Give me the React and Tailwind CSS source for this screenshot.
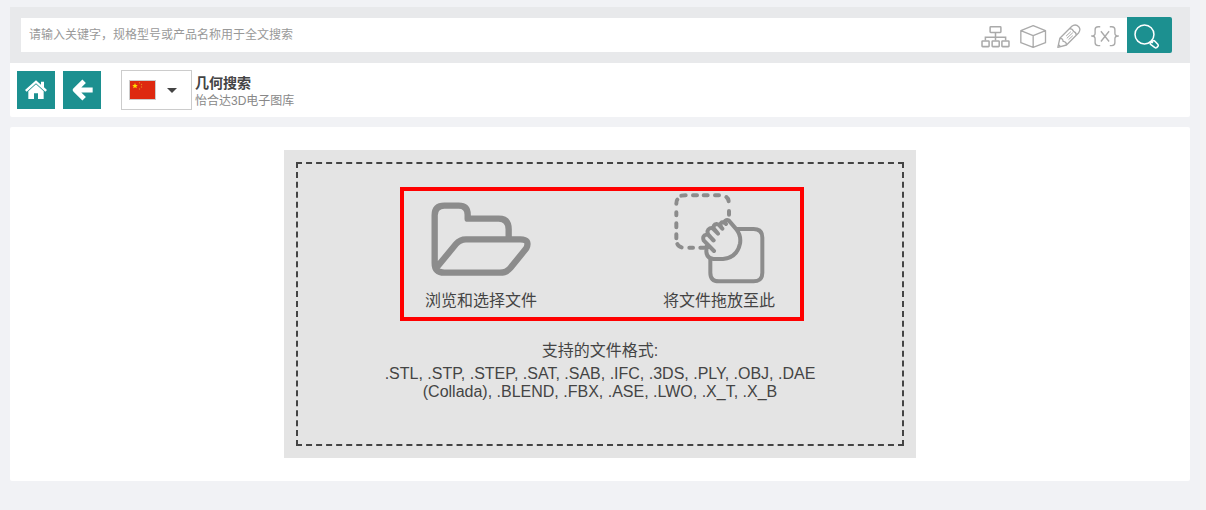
import { useState } from "react";

const FORMATS =
  ".STL, .STP, .STEP, .SAT, .SAB, .IFC, .3DS, .PLY, .OBJ, .DAE (Collada), .BLEND, .FBX, .ASE, .LWO, .X_T, .X_B";

function TreeIcon() {
  return (
    <svg viewBox="46 76 86 68" className="h-[23px] w-[29px]" fill="none" stroke="#aaa" strokeWidth="4.5">
      <rect x="73" y="81" width="32" height="17" rx="2" />
      <path d="M89 98v24M59 122v-10h60v10" />
      <rect x="49" y="123" width="21" height="17" rx="2" />
      <rect x="79" y="123" width="21" height="17" rx="2" />
      <rect x="108" y="123" width="21" height="17" rx="2" />
    </svg>
  );
}

function CubeIcon() {
  return (
    <svg viewBox="159 76 80 69" className="h-[23px] w-[27px]" fill="none" stroke="#aaa" strokeWidth="4" strokeLinejoin="round">
      <path d="M198 78l37 15v36l-37 14-37-14V93zM161 93l37 15 37-15M198 108v35" />
    </svg>
  );
}

function PencilIcon() {
  return (
    <svg viewBox="272 74 71 72" className="h-6 w-6" fill="none" stroke="#aaa" strokeWidth="4" strokeLinejoin="round">
      <path d="M274 144l6-27 36-36q8-7 17-2l5 5q5 8-2 17l-36 36zM280 117q9-1 10 9 10 1 10 11M309 88q9 0 12 8 9 3 8 13M275 135l8 8" />
      <path d="M299 110l14-13M301 117l18-17M306 121l13-12" strokeWidth="3" />
    </svg>
  );
}

function BracesIcon() {
  return (
    <svg viewBox="375 78 82 64" className="h-[22px] w-7" fill="none" stroke="#aaa" strokeWidth="4" strokeLinejoin="round">
      <path d="M402 83h-6q-9 0-9 9v10q0 8-10 8 10 0 10 8v11q0 9 9 9h6M430 83h6q9 0 9 9v10q0 8 10 8-10 0-10 8v11q0 9-9 9h-6M404 96l24 30M428 96l-24 30" />
    </svg>
  );
}

function SearchIcon() {
  return (
    <svg viewBox="506 73 74 74" className="mr-[6px] h-[25px] w-[25px]" fill="none" stroke="#fff" strokeWidth="4.5" strokeLinejoin="round">
      <circle cx="537" cy="104" r="28" />
      <path d="M556 124l6 5M554 131l7-8q4-2 7 1l9 10q2 3-1 6l-3 3q-3 2-6-1l-12-9q-2-1-1-2z" />
    </svg>
  );
}

function HomeIcon() {
  return (
    <svg viewBox="76 238 66 58" className="h-5 w-[22px]" fill="#fff">
      <path d="M109 238l15 13v-9h9v17l9 8-5 5-28-25-28 25-5-5z" />
      <path d="M109 250l23 21v23h-17v-17h-12v17H86v-23z" />
    </svg>
  );
}

function BackIcon() {
  return (
    <svg viewBox="217 236 64 66" className="h-[22px] w-[21px]" fill="none" stroke="#fff" strokeWidth="15" strokeLinejoin="round">
      <path d="M254 242l-27 27 27 27M228 269h52" />
    </svg>
  );
}

function ChinaFlag() {
  return (
    <svg viewBox="0 0 27 20" className="h-5 w-[27px]">
      <rect x="0.5" y="0.5" width="26" height="19" fill="#de2910" stroke="#ccc" />
      <path d="M6 3l.8 1.9 2 .1-1.5 1.3.5 2L6 7.2 4.200 8.300l.5-2L3.200 5l2-.1z" fill="#ffde00" />
      <g fill="#e8841a">
        <circle cx="10.500" cy="2.800" r=".7" />
        <circle cx="12.500" cy="4.500" r=".7" />
        <circle cx="12.500" cy="7" r=".7" />
        <circle cx="10.500" cy="9" r=".7" />
      </g>
    </svg>
  );
}

function FolderIcon() {
  return (
    <svg viewBox="107 66 303 222" className="h-[74px] w-[101px]" fill="none" stroke="#8c8c8c" strokeWidth="19" strokeLinejoin="round">
      <path d="M340 176v-28q0-32-30-32h-93v-12q0-27-27-27h-43q-29 0-29 29v143q0 29 29 29h167q19 0 31-14l48-59q12-27-18-27H212q-18 0-30 14l-60 73" />
    </svg>
  );
}

function DragIcon() {
  return (
    <svg viewBox="99 39 273 273" className="h-[91px] w-[91px]" fill="none" stroke="#8c8c8c" strokeWidth="12" strokeLinecap="round" strokeLinejoin="round">
      <path d="M121 47q4-1 13-1M156 46h12M188 46h12M222 46h12M256 51q6 4 7 13M264 93v11M106 71q0-9 3-12M106 97v9M106 130v12M106 163v12M109 192q3 7 13 10M145 203h11M178 203h11" />
      <path d="M288 147h50q26 0 26 26v105q0 26-26 26H234q-26 0-26-26v-40" />
      <path d="M219 213l-31-32q-5-14 8-17 5-1 9 4l13 13M217 181l-15-17q-7-13 5-19 6-3 11 3l13 13M229 158l-10-12q-4-12 8-14 6 0 9 5l8 9M242 144l-4-9q2-11 12-9l5 6M249 128q5-10 14-7l24 28q14 18 10 42-9 42-51 46h-29q-20-3-21-22l1-18" />
    </svg>
  );
}

export default function App() {
  const [query, setQuery] = useState("");

  return (
    <div className="min-h-screen border-r-[6px] border-[#f3f3f4] bg-[#f1f2f5] pt-[7px] pr-[10px] pb-7 pl-[10px] font-['Liberation_Sans','Noto_Sans_CJK_SC',sans-serif] text-[#444]">
      {/* SEARCH BAR */}
      <form
        className="flex h-14 items-center bg-[#e8e9eb] pr-[18px] pl-[11px]"
        onSubmit={(e) => e.preventDefault()}
      >
        <div className="flex h-[34px] flex-1 items-center bg-white pr-2 pl-2">
          <input
            type="text"
            aria-label="全文搜索"
            value={query}
            onChange={(e) => setQuery(e.target.value)}
            placeholder="请输入关键字，规格型号或产品名称用于全文搜索"
            className="h-full min-w-0 flex-1 text-xs outline-none placeholder:text-[#999]"
          />
          <div className="flex items-center gap-[10px] pt-[2px]">
            <button type="button" aria-label="分类"><TreeIcon /></button>
            <button type="button" aria-label="几何搜索"><CubeIcon /></button>
            <button type="button" aria-label="草图搜索"><PencilIcon /></button>
            <button type="button" aria-label="变量搜索"><BracesIcon /></button>
          </div>
        </div>
        <button
          type="submit"
          aria-label="搜索"
          className="flex h-9 w-[45px] items-center justify-center rounded-r-xs bg-[#1c9090] pt-[2px]"
        >
          <SearchIcon />
        </button>
      </form>

      {/* TOOLBAR */}
      <header className="flex h-[54px] items-center rounded-b-xs bg-white pl-[7px]">
        <a href="#home" aria-label="首页" className="mr-2 flex size-[38px] items-center justify-center bg-[#1c9090]">
          <HomeIcon />
        </a>
        <a href="#back" aria-label="返回" className="mr-5 flex size-[38px] items-center justify-center bg-[#1c9090]">
          <BackIcon />
        </a>
        <button
          type="button"
          aria-label="语言"
          className="mr-[3px] flex h-10 w-[71px] items-center gap-[11px] border border-[#ccc] pl-[7px]"
        >
          <ChinaFlag />
          <svg viewBox="0 0 10 5" className="h-[5px] w-[10px]" fill="#444">
            <path d="M0 0h10L5 5z" />
          </svg>
        </button>
        <div className="pt-1">
          <h1 className="text-sm leading-[18px] font-bold">几何搜索</h1>
          <p className="text-xs leading-[18px] text-[#888]">怡合达3D电子图库</p>
        </div>
      </header>

      {/* UPLOAD AREA */}
      <main className="mt-[10px] rounded-xs bg-white py-[23px]">
        <div className="mx-auto max-w-[632px] bg-[#e4e4e4] p-3">
          <div className="border-2 border-dashed border-[#444] px-[72px] pt-[23px] pb-[43px] text-center">
            <div className="ml-[30px] grid max-w-[404px] grid-cols-[154px_154px] justify-between border-4 border-[#f00] pr-1">
              <button type="button" className="flex flex-col items-center">
                <span className="flex h-[94px] items-center pt-[2px]"><FolderIcon /></span>
                <span className="text-base leading-8">浏览和选择文件</span>
              </button>
              <div className="flex flex-col items-center">
                <span className="flex h-[94px] items-center"><DragIcon /></span>
                <span className="text-base leading-8">将文件拖放至此</span>
              </div>
            </div>
            <div className="mt-4 text-base leading-7">支持的文件格式:</div>
            <p className="text-base leading-[18px]">{FORMATS}</p>
          </div>
        </div>
      </main>
    </div>
  );
}
